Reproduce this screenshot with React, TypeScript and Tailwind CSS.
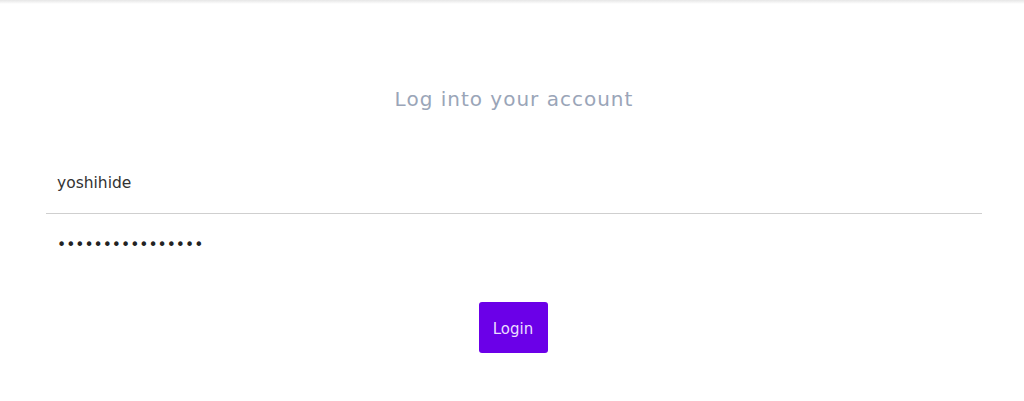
import React from "react";

export default function App() {
  return (
    <div className="min-h-[401px] bg-white" style={{ fontFamily: '"DejaVu Sans", sans-serif' }}>
      <div className="h-[4px] bg-gradient-to-b from-[#e6e6e6] to-white" />
      <div className="pl-[46px] pr-[42px]">
        <h1 className="mt-[83px] text-center text-[20px] leading-[24px] tracking-[1px] text-[#9aa5b8]">
          Log into your account
        </h1>
        <div className="mt-[41px]">
          <input
            defaultValue="yoshihide"
            className="block h-[62px] w-full border-b border-[#cfcfcf] bg-white px-[11px] text-[15.5px] text-[#333] outline-none"
          />
          <input
            type="password"
            defaultValue="abcdefghijklmnop"
            className="block h-[62px] w-full bg-white px-[11px] text-[15.5px] text-[#222] outline-none"
          />
        </div>
        <div className="mt-[26px] flex justify-center pr-[2px]">
          <button className="h-[51px] w-[69px] rounded-[3px] bg-[#6b00e8] pt-[3px] text-[15px] text-[#eadfff]">
            Login
          </button>
        </div>
      </div>
    </div>
  );
}
